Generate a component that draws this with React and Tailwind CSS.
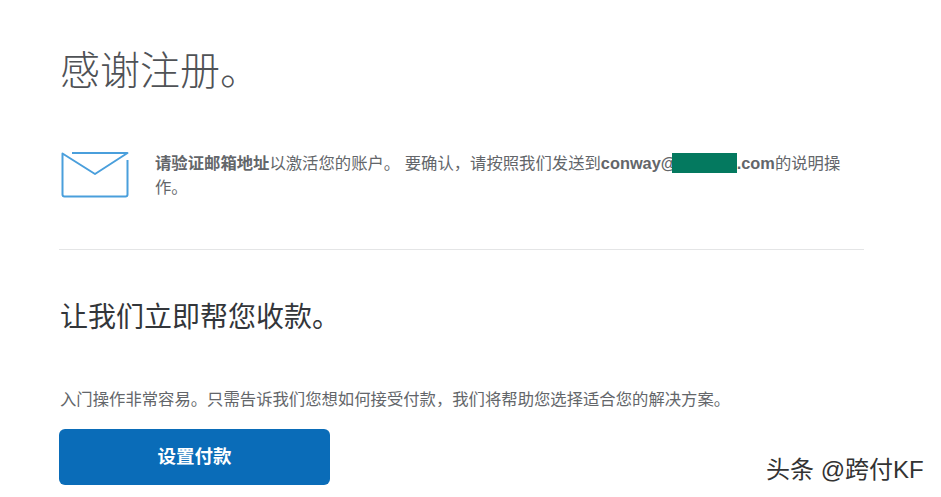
const CJK = "font-['Liberation_Sans','Noto_Sans_CJK_SC',sans-serif]";

function MailIcon() {
  return (
    <svg width="68" height="46" viewBox="0 0 68 46" fill="none" stroke="#4a9fdc" strokeWidth="2" className="shrink-0">
      <path d="M66.5 8 V42.5 a2 2 0 0 1 -2 2 H3.5 a2 2 0 0 1 -2 -2 V1.5 L34 22 L66.5 1 H11" strokeLinejoin="round" />
    </svg>
  );
}

export default function App() {
  return (
    <div className={`relative h-[497px] w-[941px] overflow-hidden bg-white pl-[59px] pr-[77px] pt-[46px] ${CJK}`}>
      <h1 className="pl-px text-[40px] leading-[50px] font-light text-[#4f5256]">感谢注册。</h1>

      <div className="mt-[51px] flex items-start gap-[26px] pl-[2px] pr-5">
        <div className="pt-[5px]">
          <MailIcon />
        </div>
        <p className="pt-[4px] text-[16.35px] leading-[24px] text-[#63666a]">
          <strong className="font-bold">请验证邮箱地址</strong>以激活您的账户。 要确认，请按照我们发送到
          <strong className="font-bold">conway@</strong>
          <span className="-ml-[5px] inline-block h-[20px] w-[65px] bg-[#04795f] align-[-4px]" />
          <strong className="font-bold">.com</strong>的说明操作。
        </p>
      </div>

      <div className="mt-[50px] h-px bg-[#e4e5e6]" />

      <h2 className="mt-[48px] pl-px text-[28px] leading-[40px] text-[#33363a]">让我们立即帮您收款。</h2>

      <p className="mt-[49px] pl-px text-[16.35px] leading-[24px] text-[#63666a]">
        入门操作非常容易。只需告诉我们您想如何接受付款，我们将帮助您选择适合您的解决方案。
      </p>

      <button className="mt-[18px] h-[56px] w-[271px] rounded-md bg-[#0a6cb8] text-[18.5px] font-bold text-white">
        设置付款
      </button>

      <div className="absolute left-[766px] top-[456px] text-[24px] leading-[28px] whitespace-nowrap text-[#333]">
        头条 @跨付KF
      </div>
    </div>
  );
}
